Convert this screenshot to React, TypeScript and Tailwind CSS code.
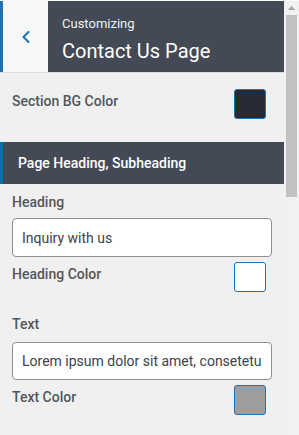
import { ChevronLeft } from 'lucide-react'

function Swatch({ color }: { color: string }) {
  return (
    <div
      className="w-[32px] h-[30px] rounded-[3px] border border-[#2271b1] shrink-0"
      style={{ backgroundColor: color }}
    />
  )
}

export default function App() {
  return (
    <div className="w-[299px] h-[435px] flex overflow-hidden bg-[#f0f0f1] font-['Roboto',sans-serif] border-t border-[#fafafa]">
      <div className="w-[284px] flex flex-col">
        <div className="h-[72px] flex border-b border-[#dcdcde]">
          <div className="w-[3px] bg-[#2271b1]" />
          <div className="w-[45px] bg-[#f6f7f7] flex items-center justify-center">
            <ChevronLeft size={20} strokeWidth={2.5} className="text-[#2271b1]" />
          </div>
          <div className="flex-1 bg-[#434a56] pl-[14px] pt-[14px]">
            <div className="text-[13px] leading-[18px] text-[#f0f0f1]">Customizing</div>
            <div className="text-[20px] leading-[28px] mt-[4px] text-white">Contact Us Page</div>
          </div>
        </div>

        <div className="flex items-start justify-between pl-[12px] pr-[18px] mt-[16px]">
          <span className="text-[14px] leading-[20px] font-medium text-[#50575e] mt-[2px]">Section BG Color</span>
          <Swatch color="#252a34" />
        </div>

        <div className="mt-[23px] h-[42px] flex items-center border-l-[3px] border-[#0073aa] bg-[#434a56] pl-[15px]">
          <span className="text-[14px] font-medium text-white">Page Heading, Subheading</span>
        </div>

        <div className="px-[12px]">
          <div className="mt-[8px] text-[14px] leading-[20px] font-medium text-[#50575e]">Heading</div>
          <input
            readOnly
            value="Inquiry with us"
            className="mt-[6px] block h-[39px] w-[260px] bg-white border border-[#8c8f94] rounded-[4px] px-[9px] text-[14px] text-[#3c434a] outline-none"
          />
          <div className="mt-[5px] flex items-start justify-between pr-[6px]">
            <span className="text-[14px] leading-[20px] font-medium text-[#50575e] mt-[2px]">Heading Color</span>
            <Swatch color="#ffffff" />
          </div>

          <div className="mt-[22px] text-[14px] leading-[20px] font-medium text-[#50575e]">Text</div>
          <input
            readOnly
            value="Lorem ipsum dolor sit amet, consetetur sadipscing"
            className="mt-[8px] block h-[38px] w-[260px] bg-white border border-[#8c8f94] rounded-[4px] px-[9px] text-[14px] text-[#3c434a] outline-none"
          />
          <div className="mt-[5px] flex items-start justify-between pr-[6px]">
            <span className="text-[14px] leading-[20px] font-medium text-[#50575e] mt-[2px]">Text Color</span>
            <Swatch color="#9e9e9e" />
          </div>
        </div>
      </div>

      <div className="w-[15px] bg-[#f1f1f1] flex flex-col items-center">
        <svg width="15" height="14" viewBox="0 0 15 14" className="shrink-0">
          <path d="M4 9 L7.5 5 L11 9 Z" fill="#a3a3a3" />
        </svg>
        <div className="w-[11px] h-[182px] bg-[#c1c1c1]" />
      </div>
    </div>
  )
}
